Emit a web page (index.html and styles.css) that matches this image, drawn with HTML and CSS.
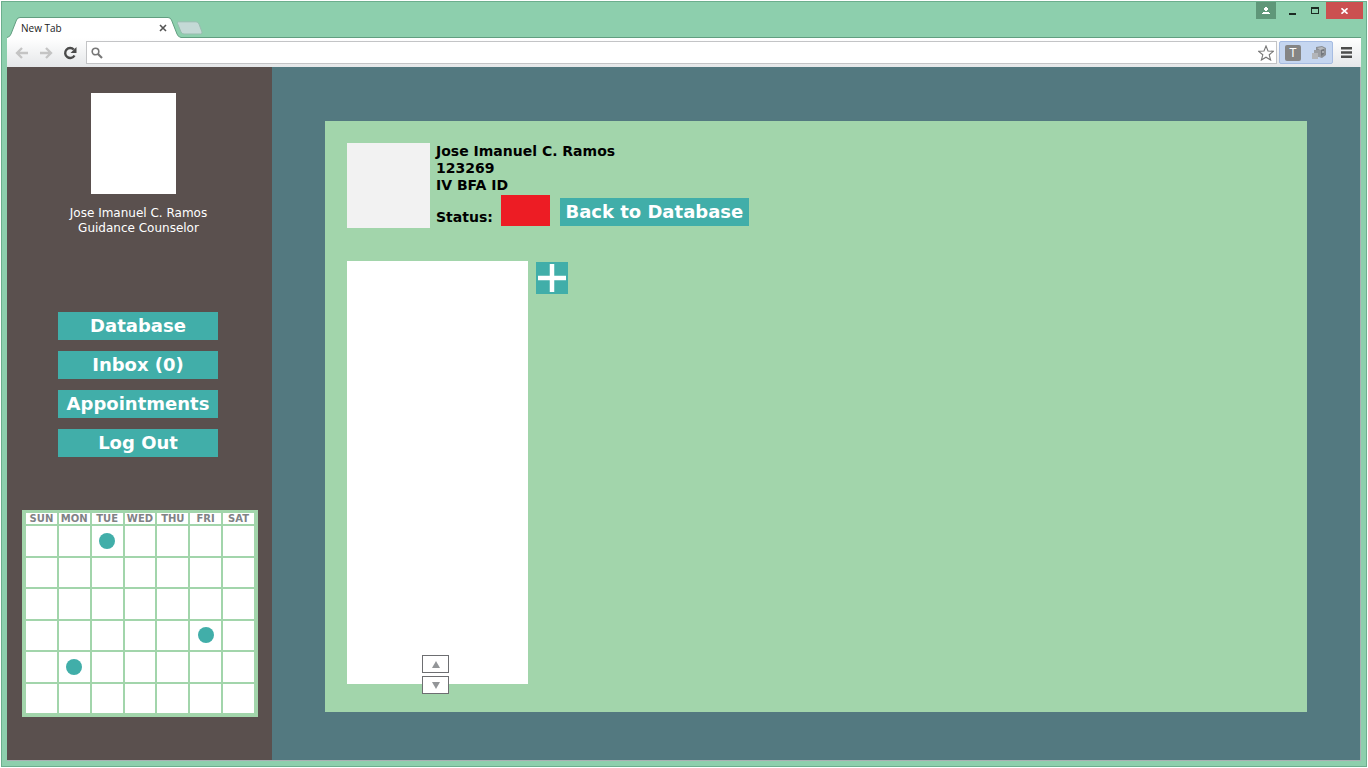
FILE: index.html
```html
<!DOCTYPE html>
<html lang="en">
<head>
<meta charset="utf-8">
<title>New Tab</title>
<link rel="stylesheet" href="styles.css">
</head>
<body>
<div class="window">
  <header class="titlebar">
    <div class="tab">
      <svg class="tab-shape" width="176" height="21" viewBox="0 0 176 21" aria-hidden="true">
        <path d="M0 21V20.500Q3 20 4 17L9.500 3Q10.500 .5 13 .5H161Q163.500 .5 164.500 3L170 17Q171 20 174 20.500V21Z" fill="#fff"/>
        <path d="M0 20.500Q3 20 4 17L9.500 3Q10.500 .5 13 .5H161Q163.500 .5 164.500 3L170 17Q171 20 174 20.500H176" fill="none" stroke="#619e80"/>
      </svg>
      <span class="tab-title">New Tab</span>
      <button class="tab-close" aria-label="Close tab"><svg width="8" height="8" viewBox="0 0 8 8"><path d="M1 1l6 6M7 1L1 7" stroke="#555" stroke-width="1.6"/></svg></button>
    </div>
    <button class="new-tab" aria-label="New tab"><svg width="26" height="14" viewBox="0 0 26 14"><path d="M1.500 .8H19Q21 .8 22 3L25 11Q25.500 13 23.500 13H7Q5 13 4 11L.5 2.500Q0 .8 1.500 .8Z" fill="#c4d9d6" stroke="#97bdaf"/></svg></button>
    <div class="win-controls">
      <button class="win-btn user" aria-label="Account"><svg width="8" height="8" viewBox="0 0 8 8"><path d="M3 0h2v1h1v2H5v1H3V3H2V1h1zM1 5h6v1h1v1H0V6h1z" fill="#fff"/></svg></button>
      <button class="win-btn" aria-label="Minimize"><svg width="8" height="10" viewBox="0 0 8 10"><path d="M0 7h7v2H0z" fill="#1c2b23"/></svg></button>
      <button class="win-btn" aria-label="Maximize"><svg width="8" height="7" viewBox="0 0 8 7"><path d="M0 0h8v7H0zM1 2v4h6V2z" fill="#1c2b23" fill-rule="evenodd"/></svg></button>
      <button class="win-btn close" aria-label="Close"><svg width="7" height="6" viewBox="0 0 7 6"><path d="M.5 .3l6 5.400M6.500 .3l-6 5.400" stroke="#fff" stroke-width="1.600"/></svg></button>
    </div>
  </header>
  <div class="toolbar">
    <button class="tool" aria-label="Back"><svg width="14" height="12" viewBox="0 0 14 12"><path d="M7 1L2 6l5 5M2.500 6H13" fill="none" stroke="#c4c4c4" stroke-width="2.300"/></svg></button>
    <button class="tool" aria-label="Forward"><svg width="14" height="12" viewBox="0 0 14 12"><path d="M7 1l5 5-5 5M11.500 6H1" fill="none" stroke="#c4c4c4" stroke-width="2.300"/></svg></button>
    <button class="tool" aria-label="Reload"><svg width="14" height="14" viewBox="0 0 14 14"><path d="M10.800 3.500A5 5 0 1 0 11.500 9.500" fill="none" stroke="#4a4a4a" stroke-width="2.400"/><path d="M13.500 1v6h-6z" fill="#4a4a4a"/></svg></button>
    <div class="omnibox">
      <svg width="12" height="12" viewBox="0 0 12 12" aria-hidden="true"><circle cx="4.500" cy="4.500" r="3.300" fill="none" stroke="#777" stroke-width="1.600"/><path d="M7 7l4 4" stroke="#777" stroke-width="2.200"/></svg>
      <input class="address" type="text" aria-label="Address">
      <button class="star" aria-label="Bookmark"><svg width="16" height="16" viewBox="0 0 16 16"><path d="M8 1l2 5 5.300.300-4.100 3.500 1.400 5.200L8 12.200 3.400 15l1.400-5.200L.7 6.300 6 6z" fill="#fff" stroke="#777" stroke-width="1.100"/></svg></button>
    </div>
    <div class="extensions">
      <button class="ext-t">T</button>
      <button class="ext" aria-label="Extension"><svg width="16" height="16" viewBox="0 0 16 16"><path d="M5 2l6-1 4 2v7l-4 3-6-2z" fill="#8b8f94"/><path d="M6 3l5-1 3 2-5 1z" fill="#b7babd"/><path d="M10 5l3-1v5l-3 2z" fill="#73777d"/><path d="M3 5h7v7H3z" fill="#9a9da2"/><path d="M1 8h6v6H1z" fill="#b3b5b9"/><path d="M11 6h2v2h-2z" fill="#a9acb0"/></svg></button>
    </div>
    <button class="menu" aria-label="Menu"><svg width="11" height="11" viewBox="0 0 11 11"><path d="M0 0h11v2.600H0zM0 4.200h11v2.600H0zM0 8.400h11V11H0z" fill="#4c4c4c"/></svg></button>
  </div>
  <div class="page">
    <aside class="sidebar">
      <div class="avatar"></div>
      <p class="who">Jose Imanuel C. Ramos<br>Guidance Counselor</p>
      <nav class="nav">
        <a class="btn" href="#database">Database</a>
        <a class="btn" href="#inbox">Inbox (0)</a>
        <a class="btn" href="#appointments">Appointments</a>
        <a class="btn" href="#logout">Log Out</a>
      </nav>
      <table class="calendar">
        <thead><tr><th>SUN</th><th>MON</th><th>TUE</th><th>WED</th><th>THU</th><th>FRI</th><th>SAT</th></tr></thead>
        <tbody>
          <tr><td></td><td></td><td><span class="dot"></span></td><td></td><td></td><td></td><td></td></tr>
          <tr><td></td><td></td><td></td><td></td><td></td><td></td><td></td></tr>
          <tr><td></td><td></td><td></td><td></td><td></td><td></td><td></td></tr>
          <tr><td></td><td></td><td></td><td></td><td></td><td><span class="dot"></span></td><td></td></tr>
          <tr><td></td><td><span class="dot"></span></td><td></td><td></td><td></td><td></td><td></td></tr>
          <tr><td></td><td></td><td></td><td></td><td></td><td></td><td></td></tr>
        </tbody>
      </table>
    </aside>
    <main class="main">
      <section class="panel">
        <div class="student">
          <div class="photo"></div>
          <div class="details">
            <p class="info">Jose Imanuel C. Ramos<br>123269<br>IV BFA ID</p>
            <div class="status-row">
              <span class="status-label">Status:</span>
              <span class="status-color"></span>
              <a class="btn back" href="#database">Back to Database</a>
            </div>
          </div>
        </div>
        <div class="records">
          <div class="list">
            <div class="stepper">
              <button class="step" aria-label="Up"><svg width="8" height="7" viewBox="0 0 8 7"><path d="M4 0l4 7H0z" fill="#939598"/></svg></button>
              <button class="step" aria-label="Down"><svg width="8" height="7" viewBox="0 0 8 7"><path d="M0 0h8L4 7z" fill="#939598"/></svg></button>
            </div>
          </div>
          <button class="add" aria-label="Add"><svg width="28" height="28" viewBox="0 0 28 28"><path d="M14 0v28M0 14h28" stroke="#fff" stroke-width="4.500"/></svg></button>
        </div>
      </section>
    </main>
  </div>
</div>
</body>
</html>
```
FILE: styles.css
```css
* { box-sizing: border-box; }

body {
  margin: 0;
  padding: 1px;
  min-height: 100vh;
  display: flex;
  background: #fff;
  font-family: Verdana, "DejaVu Sans", sans-serif;
}

button {
  padding: 0;
  border: 0;
  background: none;
  display: flex;
  align-items: center;
  justify-content: center;
}

p { margin: 0; }

.window {
  flex: 1;
  display: flex;
  flex-direction: column;
  padding: 0 5px 5px;
  background: #8dcfad;
  border: 1px solid #6cae8d;
}

/* Browser frame */
.titlebar {
  display: flex;
  align-items: flex-end;
  height: 36px;
  border-bottom: 1px solid #619e80;
}

.tab {
  position: relative;
  display: flex;
  align-items: center;
  justify-content: space-between;
  width: 170px;
  height: 21px;
  margin-bottom: -1px;
  padding: 0 10px 0 14px;
}

.tab-shape { position: absolute; left: 0; top: 0; }

.tab-title {
  position: relative;
  font: 10px/20px "Open Sans", sans-serif;
  color: #222;
}

.tab-close { position: relative; }

.new-tab { margin-bottom: 2px; }

.win-controls {
  display: flex;
  align-self: flex-start;
  margin: 0 -2px 0 auto;
}

.win-btn { width: 22px; height: 17px; }
.win-btn.user { width: 20px; margin-right: 6px; background: #5f9779; }
.win-btn.close { width: 37px; background: #cb5050; }

.toolbar {
  display: flex;
  align-items: center;
  height: 29px;
  padding: 0 9px 0 8px;
  background: linear-gradient(#fff, #e5e7e9);
}

.tool { width: 14px; margin-right: 10px; }
.tool + .tool + .tool { margin-right: 9px; }

.omnibox {
  flex: 1;
  display: flex;
  align-items: center;
  height: 23px;
  padding: 0 2px 0 4px;
  border: 1px solid #c3c4c6;
  background: #fff;
}

.address {
  flex: 1;
  min-width: 0;
  border: 0;
  outline: 0;
  background: none;
  font: 13px "Open Sans", sans-serif;
}

.extensions {
  display: flex;
  align-items: center;
  gap: 10px;
  height: 23px;
  margin: 0 8px 0 2px;
  padding: 0 5px;
  border: 1px solid #a6bce2;
  border-radius: 2px;
  background: #c5d6f0;
}

.ext-t {
  width: 16px;
  height: 16px;
  border-radius: 2px;
  background: #858585;
  color: #fff;
  font: 12px "Liberation Sans", sans-serif;
}

/* Page */
.page {
  flex: 1;
  display: flex;
  border: solid #aab0b4;
  border-width: 0 1px 1px 0;
}

.sidebar {
  width: 265px;
  padding: 26px 14px 43px 15px;
  display: flex;
  flex-direction: column;
  background: #5a504e;
}

.avatar {
  width: 85px;
  height: 101px;
  margin-left: 69px;
  background: #fff;
}

.who {
  margin-top: 12px;
  padding-right: 3px;
  font-size: 12px;
  line-height: 15px;
  text-align: center;
  color: #fff;
}

.nav {
  display: flex;
  flex-direction: column;
  align-items: center;
  gap: 11px;
  margin-top: 76px;
  padding-right: 4px;
}

.btn {
  display: block;
  width: 160px;
  height: 28px;
  background: #41aea9;
  color: #fff;
  font-size: 18px;
  font-weight: bold;
  line-height: 28px;
  text-align: center;
  text-decoration: none;
}

.calendar {
  width: 236px;
  height: 207px;
  margin-top: auto;
  padding: 1px 2px 2px;
  table-layout: fixed;
  border-collapse: separate;
  border-spacing: 2px;
  background: #a2d5ab;
}

.calendar th {
  height: 11px;
  padding: 1px 0 0;
  background: #fff;
  color: #808285;
  font-size: 10px;
  line-height: 10px;
}

.calendar td { height: 29px; padding: 0; background: #fff; }

.dot {
  display: block;
  width: 16px;
  height: 16px;
  margin: 0 auto;
  border-radius: 50%;
  background: #41aea9;
}

.main {
  flex: 1;
  display: flex;
  padding: 54px 53px 48px;
  background: #537980;
}

.panel {
  flex: 1;
  display: flex;
  flex-direction: column;
  padding: 22px 22px 28px;
  background: #a2d5ab;
}

.student { display: flex; gap: 6px; }

.photo { width: 83px; height: 85px; background: #f2f2f2; }

.info, .status-label {
  font-size: 14px;
  font-weight: bold;
  line-height: 17px;
  color: #000;
}

.status-row { display: flex; align-items: flex-end; margin-top: 1px; }

.status-color {
  width: 49px;
  height: 31px;
  margin: 0 10px 0 8px;
  background: #ed1c24;
}

.back { width: 189px; }

.records {
  flex: 1;
  display: flex;
  align-items: flex-start;
  gap: 8px;
  margin-top: 33px;
}

.list {
  position: relative;
  align-self: stretch;
  width: 181px;
  background: #fff;
}

/* Straddles the bottom edge of the list */
.stepper {
  position: absolute;
  right: 79px;
  bottom: -10px;
  display: flex;
  flex-direction: column;
  gap: 3px;
}

.step {
  width: 27px;
  height: 18px;
  border: 1px solid #6d6e71;
  background: #fff;
}

.add {
  width: 32px;
  height: 32px;
  margin-top: 1px;
  background: #41aea9;
}
```
